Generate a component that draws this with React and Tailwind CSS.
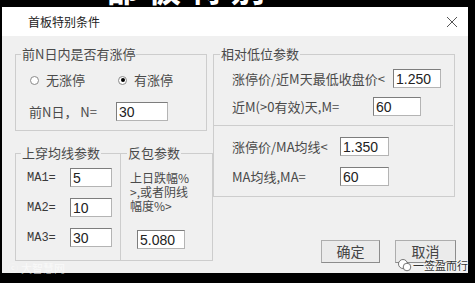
const Field = ({ value, w = "w-[48px]" }) => (
  <div
    className={`${w} h-[19px] shrink-0 bg-white border border-[#b4b4b4] border-t-[#7d7d7d] border-l-[#7d7d7d] pl-[2px] flex items-center text-[14px] leading-none text-[#222] font-['Liberation_Sans',sans-serif]`}
  >
    {value}
  </div>
);

const Radio = ({ checked, label }) => (
  <div className="flex items-center w-[88px]">
    <div className="w-[9px] h-[9px] rounded-full bg-white border border-[#8a8a8a] flex items-center justify-center">
      {checked && <div className="w-[4px] h-[4px] rounded-full bg-black" />}
    </div>
    <span className="ml-[7px]">{label}</span>
  </div>
);

const Legend = ({ children, ml = "ml-[5px]" }) => (
  <legend className={`${ml} px-[1px] text-[13px] leading-4`}>{children}</legend>
);

export default function App() {
  return (
    <div className="w-[475px] h-[283px] bg-black overflow-hidden relative font-['Noto_Sans_CJK_SC',sans-serif] text-[13px] text-[#4a4a4a]">
      {/* background app peeking through */}
      <div className="h-[7px] overflow-hidden pl-[105px]">
        <div className="-mt-[30px] text-[34px] font-bold leading-[36px] text-white tracking-[8px]">
          都板特别
        </div>
      </div>

      <div className="ml-[2px] w-[466px] h-[266px] flex flex-col">
        {/* title bar */}
        <div className="h-[29px] bg-white flex items-center justify-between pl-[26px] pr-[10px]">
          <span className="text-[12px] text-[#222]">首板特别条件</span>
          <svg width="12" height="12" viewBox="0 0 12 12">
            <path d="M1 1L11 11M11 1L1 11" stroke="#555" strokeWidth="1" />
          </svg>
        </div>

        {/* body */}
        <div className="flex-1 bg-[#f0f0f0] flex pt-[10px] pl-[13px]">
          {/* left column */}
          <div className="w-[198px] flex flex-col">
            <fieldset className="w-[185px] h-[85px] border border-[#cdcdcd]">
              <Legend>前N日内是否有涨停</Legend>
              <div className="mt-[10px] h-4 flex items-center pl-[14px]">
                <Radio label="无涨停" />
                <Radio checked label="有涨停" />
              </div>
              <div className="mt-[14px] h-[19px] flex items-center pl-[13px]">
                <span className="w-[87px]">前N日， N=</span>
                <Field value="30" w="w-[52px]" />
              </div>
            </fieldset>

            <div className="mt-[14px] flex">
              <fieldset className="w-[106px] h-[116px] border border-[#cdcdcd]">
                <Legend>上穿均线参数</Legend>
                <div className="mt-[7px] flex flex-col gap-[11px] pl-[11px]">
                  {[
                    ["MA1=", "5"],
                    ["MA2=", "10"],
                    ["MA3=", "30"],
                  ].map(([k, v]) => (
                    <div key={k} className="h-[19px] flex items-center">
                      <span className="w-[43px] text-[12px] font-['Liberation_Mono',monospace] text-[#3a3a3a]">
                        {k}
                      </span>
                      <Field value={v} w="w-[42px]" />
                    </div>
                  ))}
                </div>
              </fieldset>
              <fieldset className="w-[92px] h-[116px] border border-l-0 border-[#cdcdcd]">
                <Legend ml="ml-[6px]">反包参数</Legend>
                <div className="mt-[10px] pl-[9px] text-[12px] leading-[14px]">
                  上日跌幅%
                  <br />
                  &gt;,或者阴线
                  <br />
                  幅度%&gt;
                </div>
                <div className="mt-[17px] pl-[16px]">
                  <Field value="5.080" />
                </div>
              </fieldset>
            </div>
          </div>

          {/* right column */}
          <div className="w-[243px] flex flex-col">
            <fieldset className="w-[242px] h-[151px] border border-[#cdcdcd]">
              <Legend ml="ml-[6px]">相对低位参数</Legend>
              <div className="mt-[7px] h-[19px] flex items-center pl-[18px]">
                <span className="w-[161px]">涨停价/近M天最低收盘价&lt;</span>
                <Field value="1.250" />
              </div>
              <div className="mt-[9px] h-[19px] flex items-center pl-[18px]">
                <span className="w-[141px]">近M(&gt;0有效)天,M=</span>
                <Field value="60" />
              </div>
              <div className="mt-[9px] mr-[1px] border-t border-[#cdcdcd]" />
              <div className="mt-[11px] h-[19px] flex items-center pl-[18px]">
                <span className="w-[108px]">涨停价/MA均线&lt;</span>
                <Field value="1.350" w="w-[49px]" />
              </div>
              <div className="mt-[11px] h-[19px] flex items-center pl-[18px]">
                <span className="w-[108px]">MA均线,MA=</span>
                <Field value="60" w="w-[49px]" />
              </div>
            </fieldset>

            <div className="mt-[43px] flex justify-end gap-[15px]">
              <button className="w-[59px] h-[23px] bg-[#ebebeb] border border-[#adadad] border-r-[#8c8c8c] border-b-[#8c8c8c] text-[14px] text-[#444]">
                确定
              </button>
              <button className="w-[61px] h-[23px] bg-[#ebebeb] border border-[#adadad] border-r-[#8c8c8c] border-b-[#8c8c8c] text-[14px] text-[#444]">
                取消
              </button>
            </div>
          </div>
        </div>
      </div>

      {/* watermarks */}
      <div className="absolute left-[8px] top-[262px] flex items-center gap-[3px] text-[11px] leading-[12px] text-white/60">
        <span className="text-[10px]">ⓒ</span>
        <span>大智慧网</span>
      </div>
      <div className="absolute left-[397px] top-[258px] flex items-center text-[11px] leading-[13px] text-[#333] [text-shadow:0_0_2px_#fff,0_0_2px_#fff]">
        <svg width="16" height="14" viewBox="0 0 16 14">
          <circle cx="6" cy="6" r="4.5" fill="#fff" stroke="#555" strokeWidth="0.8" />
          <circle cx="10" cy="9" r="3.8" fill="#fff" stroke="#555" strokeWidth="0.8" />
        </svg>
        <span>一签盈而行</span>
      </div>
    </div>
  );
}
